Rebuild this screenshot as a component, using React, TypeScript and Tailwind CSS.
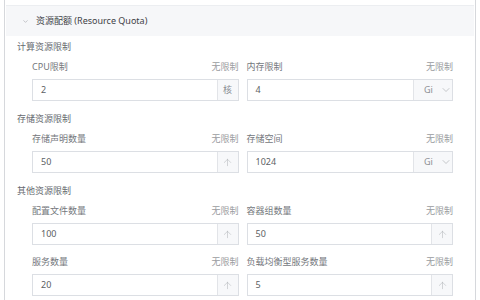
import { ArrowUp, ChevronDown } from "lucide-react";

type Field = { label: string; value: string; addon: "core" | "gi" | "up" };

const sections: { title: string; fields: Field[] }[] = [
  {
    title: "计算资源限制",
    fields: [
      { label: "CPU限制", value: "2", addon: "core" },
      { label: "内存限制", value: "4", addon: "gi" },
    ],
  },
  {
    title: "存储资源限制",
    fields: [
      { label: "存储声明数量", value: "50", addon: "up" },
      { label: "存储空间", value: "1024", addon: "gi" },
    ],
  },
  {
    title: "其他资源限制",
    fields: [
      { label: "配置文件数量", value: "100", addon: "up" },
      { label: "容器组数量", value: "50", addon: "up" },
      { label: "服务数量", value: "20", addon: "up" },
      { label: "负载均衡型服务数量", value: "5", addon: "up" },
    ],
  },
];

function Addon({ kind }: { kind: Field["addon"] }) {
  if (kind === "core") {
    return (
      <div className="w-[21px] flex items-center justify-center border-l border-[#e2e4e8] bg-[#f7f8fa] text-[9px] text-[#8c8f94]">
        核
      </div>
    );
  }
  if (kind === "gi") {
    return (
      <div className="w-[39px] flex items-center gap-[7px] pl-[10px] border-l border-[#e2e4e8] bg-[#f7f8fa] text-[9px] text-[#8c8f94]">
        <span>Gi</span>
        <ChevronDown size={12} strokeWidth={1.1} className="text-[#9a9da2]" />
      </div>
    );
  }
  return (
    <div className="w-[21px] flex items-center justify-center border-l border-[#e2e4e8] bg-[#f7f8fa]">
      <ArrowUp size={11} strokeWidth={1} className="text-[#a3a6ab]" />
    </div>
  );
}

function FieldBox({ field }: { field: Field }) {
  return (
    <div className="flex flex-col gap-[5px]">
      <div className="h-[14px] flex items-center justify-between text-[9px] text-[#74777c]">
        <span>{field.label}</span>
        <span className="text-[#9a9ca0]">无限制</span>
      </div>
      <div className="h-[22px] flex border border-[#dcdfe4] bg-white">
        <div className="flex-1 flex items-center pl-[8px] text-[9px] text-[#5c5f64]">{field.value}</div>
        <Addon kind={field.addon} />
      </div>
    </div>
  );
}

export default function App() {
  return (
    <div
      className="w-[480px] h-[300px] bg-white overflow-hidden px-[4px]"
      style={{ fontFamily: '"Noto Sans", "Noto Sans CJK SC", sans-serif' }}
    >
      <div className="h-full border-l border-r border-[#d6d8dc] pt-[5px] px-[1px]">
        <div className="h-[31px] flex items-center gap-[7px] pl-[16px] bg-[#f6f7f9] border-t border-[#eceef1] text-[9px] text-[#3f4247]">
          <ChevronDown size={7} strokeWidth={1.6} className="text-[#8a8d92]" />
          <span>资源配额 (Resource Quota)</span>
        </div>
        <div className="pt-[4px] pl-[11px] pr-[21px] flex flex-col gap-[11px]">
          {sections.map((s) => (
            <div key={s.title} className="flex flex-col gap-[6px]">
              <div className="h-[14px] flex items-center text-[9px] text-[#666a6f]">{s.title}</div>
              <div className="grid grid-cols-2 gap-x-[8px] gap-y-[10px] pl-[15px]">
                {s.fields.map((f) => (
                  <FieldBox key={f.label} field={f} />
                ))}
              </div>
            </div>
          ))}
        </div>
      </div>
    </div>
  );
}
